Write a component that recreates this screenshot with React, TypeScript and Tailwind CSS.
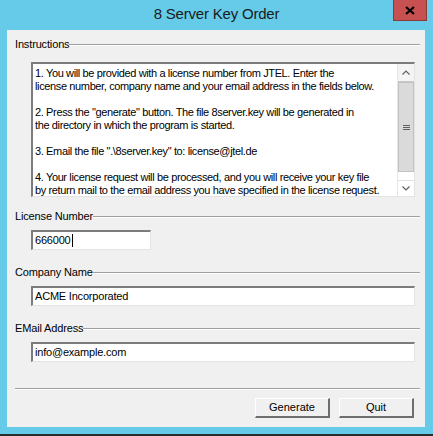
const sunken =
  "border-t-2 border-l-2 border-b border-r border-t-[#7c7c7c] border-l-[#7c7c7c] border-b-[#e3e3e3] border-r-[#e3e3e3] bg-white";

function Header({ label, className }: { label: string; className?: string }) {
  return (
    <div className={"flex h-[13px] items-center pl-[8px] pr-[5px] " + (className ?? "")}>
      <span className="leading-[13px] tracking-[-0.15px]">{label}</span>
      <div className="h-[2px] flex-1 border-t border-b border-t-[#a0a0a0] border-b-white" />
    </div>
  );
}

function Field({ value, width, caret }: { value: string; width: string; caret?: boolean }) {
  return (
    <div className={`ml-[24px] mt-[7px] flex h-[20px] items-center pl-[2px] ${width} ${sunken}`}>
      <span className="leading-[13px] tracking-[-0.2px]">{value}</span>
      {caret && <span className="ml-px h-[13px] w-px bg-black" />}
    </div>
  );
}

function Button({ label }: { label: string }) {
  return (
    <button className="flex h-[20px] w-[75px] items-center justify-center border-t border-l border-b-2 border-r-2 border-t-white border-l-white border-b-[#6e6e6e] border-r-[#6e6e6e] bg-[#f0f0f0] text-[11px] leading-[13px] text-black">
      {label}
    </button>
  );
}

const lines = [
  "1. You will be provided with a license number from JTEL. Enter the",
  "license number, company name and your email address in the fields below.",
  "",
  "2. Press the \"generate\" button. The file 8server.key will be generated in",
  "the directory in which the program is started.",
  "",
  "3. Email the file \".\\8server.key\" to: license@jtel.de",
  "",
  "4. Your license request will be processed, and you will receive your key file",
  "by return mail to the email address you have specified in the license request.",
];

export default function App() {
  return (
    <div className="flex h-[436px] w-[433px] flex-col bg-[#65cbe9] font-['Liberation_Sans',Arial,sans-serif] text-[11px] text-black">
      {/* title bar */}
      <div className="relative flex h-[30px] items-center justify-center pb-[2px]">
        <span className="text-[15px] tracking-[-0.2px] text-[#1b1b1b]">8 Server Key Order</span>
        <div className="absolute right-[6px] top-0 flex h-[21px] w-[34px] items-center justify-center border-b border-l border-r border-[#8a3a3a] bg-[#c75050]">
          <svg width="10" height="9" viewBox="0 0 10 9">
            <path d="M1 1 L9 8 M9 1 L1 8" stroke="#000" strokeWidth="2.2" />
          </svg>
        </div>
      </div>

      {/* client area */}
      <div className="ml-[7px] flex h-[397px] w-[418px] flex-col bg-[#f0f0f0]">
        <Header label="Instructions" className="mt-[8px]" />

        <div className={`ml-[24px] mt-[11px] flex h-[135px] w-[384px] ${sunken}`}>
          <div className="min-w-0 flex-1 overflow-hidden pl-[2px] pt-[3px] leading-[13px] tracking-[-0.37px] whitespace-pre">
            {lines.map((l, i) => (
              <div key={i} className="h-[13px]">
                {l}
              </div>
            ))}
          </div>
          <div className="flex w-[17px] shrink-0 flex-col border-l border-[#e6e6e6] bg-white">
            <div className="flex h-[18px] items-center justify-center border-b border-[#c8c8c8] bg-[#f4f4f4]">
              <svg width="8" height="5" viewBox="0 0 8 5">
                <path d="M0.5 4.5 L4 1 L7.5 4.5" fill="none" stroke="#606060" strokeWidth="1.2" />
              </svg>
            </div>
            <div className="flex h-[90px] items-center justify-center border border-[#c2c2c2] bg-[#dadada]">
              <div className="flex flex-col gap-[1px]">
                <div className="h-px w-[7px] bg-[#606060]" />
                <div className="h-px w-[7px] bg-[#606060]" />
                <div className="h-px w-[7px] bg-[#606060]" />
              </div>
            </div>
            <div className="flex-1" />
            <div className="flex h-[16px] items-center justify-center border-t border-[#e0e0e0]">
              <svg width="8" height="5" viewBox="0 0 8 5">
                <path d="M0.5 0.5 L4 4 L7.5 0.5" fill="none" stroke="#606060" strokeWidth="1.2" />
              </svg>
            </div>
          </div>
        </div>

        <Header label="License Number" className="mt-[13px]" />
        <Field value="666000" width="w-[120px]" caret />

        <Header label="Company Name" className="mt-[16px]" />
        <Field value="ACME Incorporated" width="w-[384px]" />

        <Header label="EMail Address" className="mt-[16px]" />
        <Field value="info@example.com" width="w-[384px]" />

        <div className="ml-[8px] mt-[26px] h-[2px] w-[405px] border-t border-b border-t-[#a0a0a0] border-b-white" />

        <div className="mt-[8px] flex gap-[9px] pl-[248px]">
          <Button label="Generate" />
          <Button label="Quit" />
        </div>
      </div>

      <div className="mt-[7px] h-[2px] bg-[#2b2b2b]" />
    </div>
  );
}
